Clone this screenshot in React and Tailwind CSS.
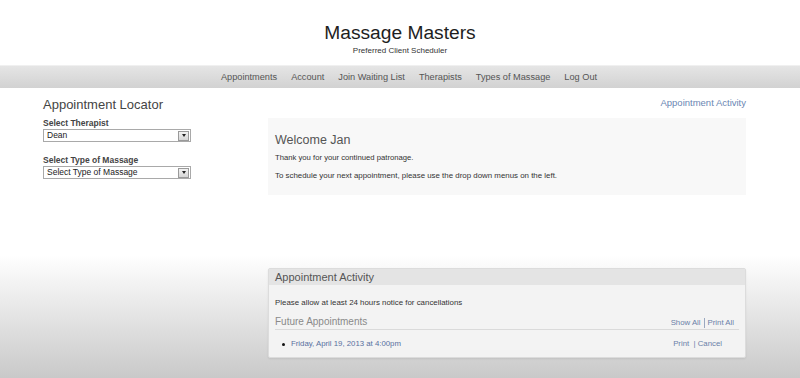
import React from "react";

function FakeSelect({ value }) {
  return (
    <div className="mt-[1px] flex h-[13px] w-[148px] items-center border border-[#a9a9a9] bg-white">
      <span className="flex-1 pl-[3px] text-[8.5px] leading-[11px] text-[#222]">{value}</span>
      <span className="mr-[1px] flex h-[10px] w-[11px] items-center justify-center border border-[#9a9a9a] bg-[linear-gradient(to_bottom,#f2f2f2,#d6d6d6)]">
        <span className="h-0 w-0 border-x-[2.5px] border-t-[3px] border-x-transparent border-t-[#222]" />
      </span>
    </div>
  );
}

export default function App() {
  const nav = ["Appointments", "Account", "Join Waiting List", "Therapists", "Types of Massage", "Log Out"];
  return (
    <div className="h-[378px] w-full overflow-hidden bg-[linear-gradient(to_bottom,#ffffff_0px,#ffffff_255px,#c9c9c9_378px)] font-['Liberation_Sans',Arial,sans-serif]">
      <header className="pt-[23px] text-center">
        <h1 className="text-[19.2px] leading-[20px] text-[#1e1e1e]">Massage Masters</h1>
        <div className="mt-[3px] text-[8px] leading-[10px] text-[#333]">Preferred Client Scheduler</div>
      </header>
      <nav className="mt-[9px] flex h-[23px] items-center justify-center gap-[14px] border-t border-[#f0f0f0] bg-[linear-gradient(to_bottom,#e5e5e5,#d2d2d2)] pl-[18px]">
        {nav.map((n) => (
          <span key={n} className="text-[9.2px] leading-[12px] text-[#555]">{n}</span>
        ))}
      </nav>
      <main className="flex">
        <aside className="w-[268px] pl-[43px] pt-[9px]">
          <h2 className="text-[13px] leading-[16px] text-[#444]">Appointment Locator</h2>
          <div className="mt-[5px] text-[8.5px] font-bold leading-[10px] text-[#444]">Select Therapist</div>
          <FakeSelect value="Dean" />
          <div className="mt-[13px] text-[8.5px] font-bold leading-[10px] text-[#444]">Select Type of Massage</div>
          <FakeSelect value="Select Type of Massage" />
        </aside>
        <section className="w-[478px] pt-[9px]">
          <div className="pr-[-2px] text-right text-[9.5px] leading-[12px] text-[#6b86b3]">Appointment Activity</div>
          <div className="mt-[9px] h-[77px] bg-[#f8f8f8] pl-[7px] pt-[14px]">
            <div className="text-[12.5px] leading-[16px] text-[#555]">Welcome Jan</div>
            <div className="mt-[5px] text-[7.7px] leading-[10px] text-[#333]">Thank you for your continued patronage.</div>
            <div className="mt-[8px] text-[7.9px] leading-[10px] text-[#333]">To schedule your next appointment, please use the drop down menus on the left.</div>
          </div>
          <div className="mt-[73px] rounded-[2px] border border-[#dcdcdc] bg-[#f3f3f3] pb-[8px] shadow-[0_1px_2px_rgba(0,0,0,0.08)]">
            <div className="flex h-[16px] items-center bg-[#e4e4e4] pl-[6px] text-[11px] leading-[14px] text-[#555]">Appointment Activity</div>
            <div className="mt-[13px] pl-[6px] text-[7.9px] leading-[10px] text-[#333]">Please allow at least 24 hours notice for cancellations</div>
            <div className="mx-[6px] mt-[7px] flex items-end justify-between border-b border-[#dadada] pb-[1px] pr-[5px]">
              <span className="text-[10px] leading-[13px] text-[#8a8a8a]">Future Appointments</span>
              <span className="flex items-center text-[7.8px] leading-[10px] text-[#6a7fa8]">
                Show All<span className="mx-[3px] inline-block h-[10px] w-[1px] bg-[#9aa8c0]" />Print All
              </span>
            </div>
            <div className="mt-[9px] flex items-center justify-between pl-[13px] pr-[23px]">
              <span className="flex items-center text-[7.8px] leading-[10px] text-[#5870a0]">
                <span className="mr-[6px] inline-block h-[3px] w-[3px] rounded-full bg-[#111]" />
                Friday, April 19, 2013 at 4:00pm
              </span>
              <span className="text-[7.8px] leading-[10px] text-[#6a7fa8]">Print&nbsp; | Cancel</span>
            </div>
          </div>
        </section>
      </main>
    </div>
  );
}
